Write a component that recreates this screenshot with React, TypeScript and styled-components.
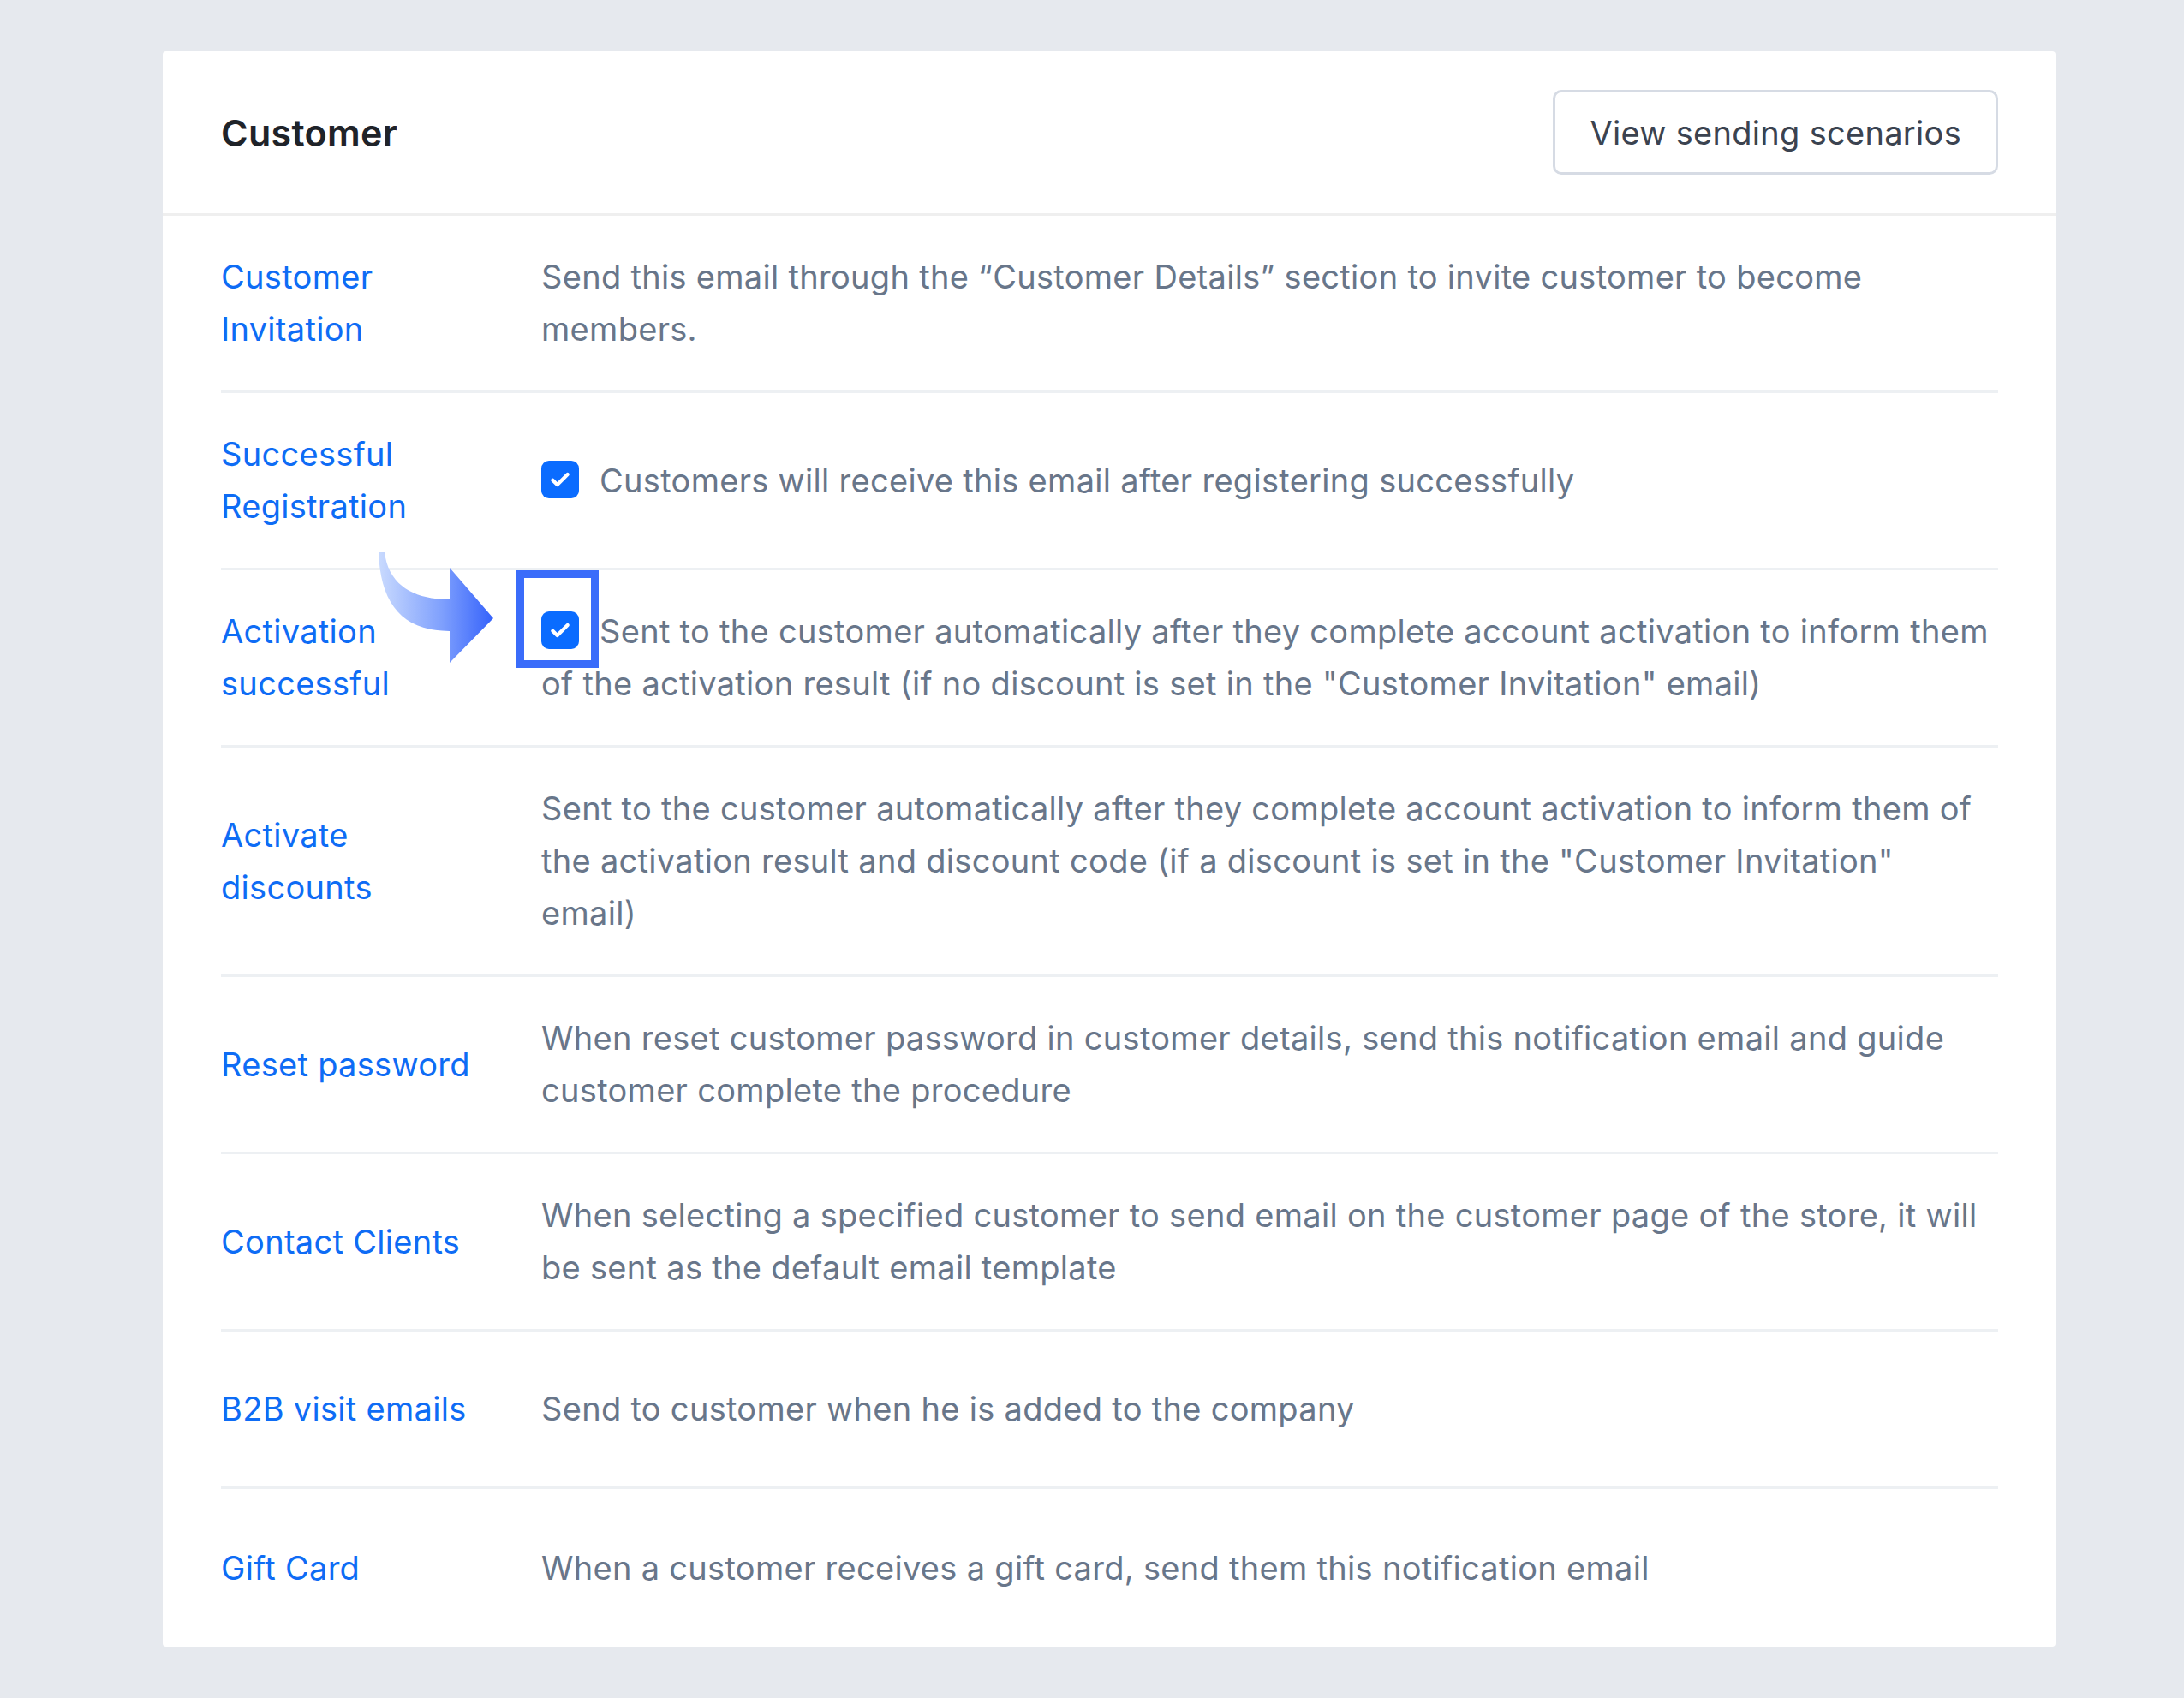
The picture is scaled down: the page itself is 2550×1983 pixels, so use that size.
import React, { ReactElement, ReactNode } from "react";
import styled, { createGlobalStyle } from "styled-components";

const labelColor = "#0e6cf5";
const textColor = "#68768a";
const lineColor = "#edf0f3";

const GlobalStyle = createGlobalStyle`
    html, body {
        margin: 0;
        padding: 0;
        background: #e6e9ee;
    }
    body {
        font-family: Inter, "Noto Sans", "Liberation Sans", sans-serif;
        -webkit-font-smoothing: antialiased;
    }
`;

const Page = styled.div`
    width: 2550px;
    min-height: 1983px;
    box-sizing: border-box;
    padding: 60px 150px 0 190px;
    background: #e6e9ee;
`;

const Card = styled.section`
    background: #ffffff;
    border-radius: 4px;
`;

const Header = styled.header`
    height: 192px;
    box-sizing: border-box;
    padding: 0 67px 0 68px;
    display: flex;
    align-items: center;
    justify-content: space-between;
    border-bottom: 3px solid #efefef;
`;

const Title = styled.h2`
    margin: 0;
    font-size: 43px;
    font-weight: 600;
    color: #1f2329;
    letter-spacing: 0.3px;
`;

const OutlineButton = styled.button`
    height: 99px;
    padding: 0 40px;
    background: #ffffff;
    border: 3px solid #d6dbe4;
    border-radius: 10px;
    font-family: inherit;
    font-size: 38px;
    letter-spacing: 0.3px;
    color: #3b4350;
    cursor: pointer;
`;

const List = styled.div`
    padding: 0 67px 0 68px;
`;

const Row = styled.div<{ last?: boolean }>`
    display: grid;
    grid-template-columns: 374px 1fr;
    align-items: center;
    min-height: 184px;
    box-sizing: border-box;
    padding: 41px 0;
    border-bottom: ${props => props.last ? "none" : `3px solid ${lineColor}`};
`;

const Label = styled.a`
    display: block;
    max-width: 315px;
    font-size: 38px;
    line-height: 61px;
    letter-spacing: 0.3px;
    color: ${labelColor};
    text-decoration: none;
    cursor: pointer;
`;

const Description = styled.p`
    margin: 0;
    max-width: 1692px;
    font-size: 38px;
    line-height: 61px;
    letter-spacing: 0.3px;
    color: ${textColor};
`;

const CheckWrap = styled.span`
    position: relative;
    display: inline-block;
    width: 44px;
    height: 44px;
    margin-right: 24px;
    vertical-align: -1px;
`;

const CheckBox = styled.span`
    display: flex;
    align-items: center;
    justify-content: center;
    width: 44px;
    height: 44px;
    border-radius: 9px;
    background: #0a6cff;
`;

const Highlight = styled.span`
    position: absolute;
    left: -29px;
    top: -48px;
    width: 96px;
    height: 114px;
    box-sizing: border-box;
    border: 9px solid #3a6cfa;
    pointer-events: none;
`;

const Pointer = styled.svg`
    position: absolute;
    left: -192px;
    top: -71px;
    width: 140px;
    height: 136px;
    pointer-events: none;
`;

const Check = ({ marked }: { marked?: boolean }): ReactElement => (
    <CheckWrap>
        <CheckBox>
            <svg width="32" height="32" viewBox="0 0 24 24" fill="none">
                <path d="M5.5 12.5l4 4L18.5 7.5" stroke="#ffffff" strokeWidth="3.2" strokeLinecap="round" strokeLinejoin="round" />
            </svg>
        </CheckBox>
        {marked && (
            <>
                <Highlight />
                <Pointer viewBox="0 0 140 136">
                    <defs>
                        <linearGradient id="arrowFill" x1="0" y1="0" x2="1" y2="0">
                            <stop offset="0" stopColor="#c9dafe" />
                            <stop offset="0.55" stopColor="#7fa0fd" />
                            <stop offset="1" stopColor="#3562fb" />
                        </linearGradient>
                    </defs>
                    <path
                        d="M2 2 C4 62 30 94 85 94 L85 131 L136 79 L85 20 L85 57 C45 57 14 42 9 2 Z"
                        fill="url(#arrowFill)"
                    />
                </Pointer>
            </>
        )}
    </CheckWrap>
);

type Item = {
    label: string;
    text: ReactNode;
};

const items: Item[] = [
    {
        label: "Customer Invitation",
        text: "Send this email through the \u201cCustomer Details\u201d section to invite customer to become members.",
    },
    {
        label: "Successful Registration",
        text: <><Check />Customers will receive this email after registering successfully</>,
    },
    {
        label: "Activation successful",
        text: <><Check marked />Sent to the customer automatically after they complete account activation to inform them of the activation result (if no discount is set in the "Customer Invitation" email)</>,
    },
    {
        label: "Activate discounts",
        text: "Sent to the customer automatically after they complete account activation to inform them of the activation result and discount code (if a discount is set in the \"Customer Invitation\" email)",
    },
    {
        label: "Reset password",
        text: "When reset customer password in customer details, send this notification email and guide customer complete the procedure",
    },
    {
        label: "Contact Clients",
        text: "When selecting a specified customer to send email on the customer page of the store, it will be sent as the default email template",
    },
    {
        label: "B2B visit emails",
        text: "Send to customer when he is added to the company",
    },
    {
        label: "Gift Card",
        text: "When a customer receives a gift card, send them this notification email",
    },
];

export default function App(): ReactElement {
    return (
        <>
            <GlobalStyle />
            <Page>
                <Card>
                    <Header>
                        <Title>Customer</Title>
                        <OutlineButton>View sending scenarios</OutlineButton>
                    </Header>
                    <List>
                        {items.map((item, i) => (
                            <Row key={item.label} last={i === items.length - 1}>
                                <Label>{item.label}</Label>
                                <Description>{item.text}</Description>
                            </Row>
                        ))}
                    </List>
                </Card>
            </Page>
        </>
    );
}
